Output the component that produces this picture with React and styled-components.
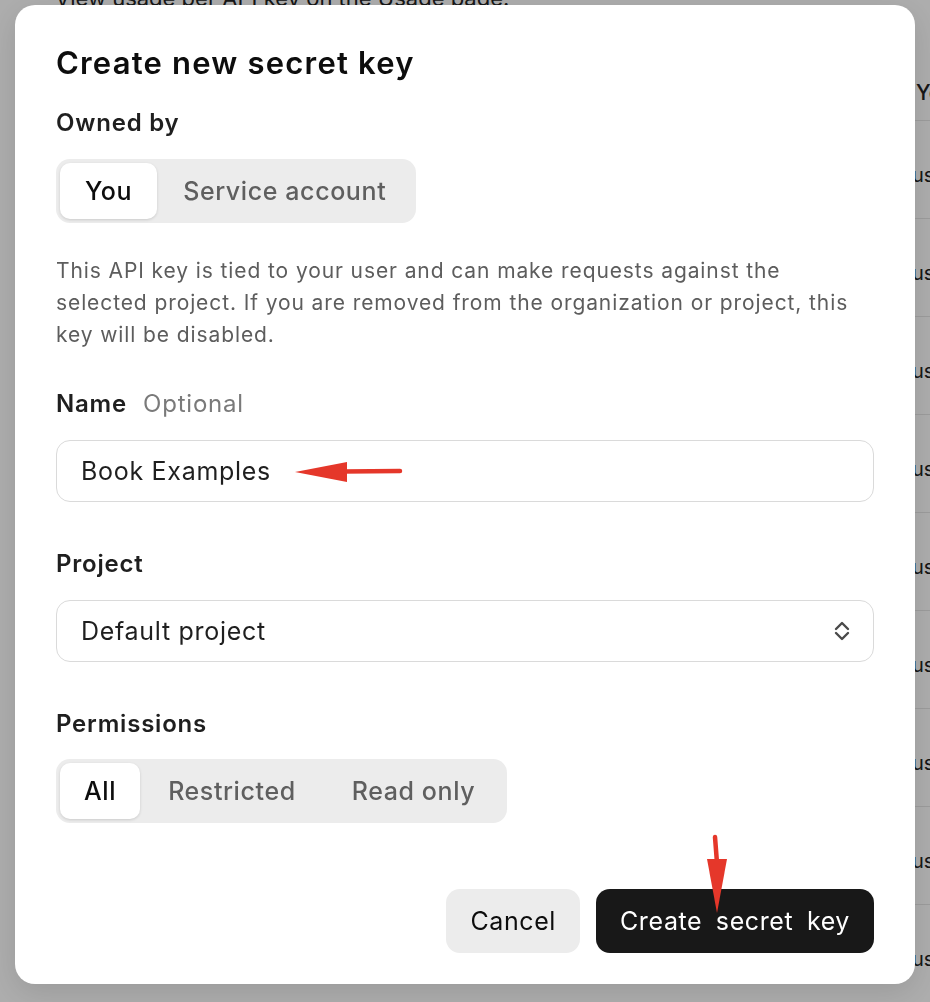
import React, { useState } from "react";
import styled, { createGlobalStyle } from "styled-components";

const GlobalStyle = createGlobalStyle`
  html, body {
    margin: 0;
    padding: 0;
    background: #ffffff;
    overflow: hidden;
  }
  body {
    font-family: Inter, "Noto Sans", "Liberation Sans", sans-serif;
    color: #1a1a1a;
  }
  * { box-sizing: border-box; }
`;

const Page = styled.div`
  width: 930px;
  height: 1002px;
  padding-left: 55px;
  overflow: hidden;
`;

const Intro = styled.p`
  margin: -16px 0 0;
  font-size: 22px;
  line-height: 28px;
  color: #222;
`;

const Table = styled.div`
  margin-top: 53px;
  display: grid;
  grid-template-columns: 857px 1fr;
`;

const HeadCell = styled.div`
  height: 56px;
  display: flex;
  align-items: center;
  padding-left: ${(p) => (p.$pad ? "4px" : "0")};
  font-size: 21px;
  font-weight: 500;
  color: #222;
  border-bottom: 1px solid #e6e6e6;
  white-space: nowrap;
`;

const Cell = styled.div`
  height: 98px;
  padding-top: 40px;
  font-size: 20px;
  line-height: 28px;
  color: #222;
  border-bottom: 1px solid #e6e6e6;
  white-space: nowrap;
`;

const Overlay = styled.div`
  position: fixed;
  inset: 0;
  background: rgba(0, 0, 0, 0.32);
  display: flex;
  align-items: flex-start;
  justify-content: flex-start;
  padding: 5px 0 0 15px;
`;

const Card = styled.div`
  position: relative;
  width: 900px;
  background: #ffffff;
  border-radius: 20px;
  padding: 40px 41px 31px;
  box-shadow: 0 8px 30px rgba(0, 0, 0, 0.12);
  display: flex;
  flex-direction: column;
`;

const Title = styled.h2`
  margin: 0;
  font-size: 31px;
  line-height: 36px;
  font-weight: 600;
  color: #0d0d0d;
  letter-spacing: 1.2px;
`;

const Label = styled.div`
  margin-top: ${(p) => p.$top}px;
  font-size: 24px;
  line-height: 30px;
  font-weight: 600;
  letter-spacing: 0.8px;
  color: #1f1f1f;
  display: flex;
  gap: 16px;
`;

const Hint = styled.span`
  font-weight: 400;
  color: #7a7a7a;
`;

const Segmented = styled.div`
  margin-top: ${(p) => p.$top}px;
  align-self: flex-start;
  display: inline-flex;
  padding: 4px;
  background: #ececec;
  border-radius: 14px;
`;

const SegOption = styled.button`
  height: 56px;
  padding: 0 ${(p) => p.$pad}px;
  border: none;
  border-radius: 10px;
  font-family: inherit;
  font-size: 25px;
  font-weight: 500;
  letter-spacing: 0.6px;
  cursor: pointer;
  background: ${(p) => (p.$active ? "#ffffff" : "transparent")};
  color: ${(p) => (p.$active ? "#0d0d0d" : "#5f5f5f")};
  box-shadow: ${(p) =>
    p.$active ? "0 1px 3px rgba(0, 0, 0, 0.14)" : "none"};
`;

const Description = styled.p`
  margin: 32px 0 0;
  max-width: 800px;
  font-size: 21px;
  line-height: 32px;
  letter-spacing: 0.9px;
  color: #5d5d5d;
`;

const Field = styled.div`
  margin-top: 21px;
  height: 62px;
  border: 1.5px solid #dadada;
  border-radius: 14px;
  display: flex;
  align-items: center;
  justify-content: space-between;
  padding: 0 23px 0 24px;
  font-size: 25px;
  letter-spacing: 0.7px;
  color: #1f1f1f;
`;

const Actions = styled.div`
  margin-top: 66px;
  display: flex;
  justify-content: flex-end;
  gap: 16px;
`;

const Button = styled.button`
  height: 64px;
  padding: 0 24px;
  border: none;
  border-radius: 14px;
  font-family: inherit;
  font-size: 25px;
  font-weight: 400;
  letter-spacing: 0.6px;
  cursor: pointer;
  word-spacing: ${(p) => (p.$primary ? "6px" : "0")};
  background: ${(p) => (p.$primary ? "#181818" : "#ececec")};
  color: ${(p) => (p.$primary ? "#ffffff" : "#0d0d0d")};
`;

const Arrow = styled.svg`
  position: absolute;
  left: ${(p) => p.$x}px;
  top: ${(p) => p.$y}px;
  pointer-events: none;
`;

const Chevrons = () => (
  <svg width="16" height="24" viewBox="0 0 16 24" fill="none">
    <path
      d="M2 10 L8 4 L14 10"
      stroke="#4a4a4a"
      strokeWidth="2.4"
      strokeLinecap="round"
      strokeLinejoin="round"
    />
    <path
      d="M2 14 L8 20 L14 14"
      stroke="#4a4a4a"
      strokeWidth="2.4"
      strokeLinecap="round"
      strokeLinejoin="round"
    />
  </svg>
);

const rows = Array.from({ length: 9 });

export default function App() {
  const [owner, setOwner] = useState("you");
  const [perm, setPerm] = useState("all");

  return (
    <>
      <GlobalStyle />
      <Page>
        <Intro>View usage per API key on the Usage page.</Intro>
        <Table>
          <HeadCell>Name</HeadCell>
          <HeadCell $pad>You</HeadCell>
          {rows.map((_, i) => (
            <React.Fragment key={i}>
              <Cell>Book Examples</Cell>
              <Cell>users</Cell>
            </React.Fragment>
          ))}
        </Table>
      </Page>

      <Overlay>
        <Card>
          <Title>Create new secret key</Title>

          <Label $top={27}>Owned by</Label>
          <Segmented $top={21}>
            <SegOption
              $pad={25}
              $active={owner === "you"}
              onClick={() => setOwner("you")}
            >
              You
            </SegOption>
            <SegOption
              $pad={26}
              $active={owner === "service"}
              onClick={() => setOwner("service")}
            >
              Service account
            </SegOption>
          </Segmented>

          <Description>
            This API key is tied to your user and can make requests against the
            selected project. If you are removed from the organization or
            project, this key will be disabled.
          </Description>

          <Label $top={38}>
            Name <Hint>Optional</Hint>
          </Label>
          <Field>Book Examples</Field>

          <Label $top={47}>Project</Label>
          <Field>
            Default project
            <Chevrons />
          </Field>

          <Label $top={47}>Permissions</Label>
          <Segmented $top={20}>
            <SegOption
              $pad={24}
              $active={perm === "all"}
              onClick={() => setPerm("all")}
            >
              All
            </SegOption>
            <SegOption
              $pad={28}
              $active={perm === "restricted"}
              onClick={() => setPerm("restricted")}
            >
              Restricted
            </SegOption>
            <SegOption
              $pad={28}
              $active={perm === "read"}
              onClick={() => setPerm("read")}
            >
              Read only
            </SegOption>
          </Segmented>

          <Actions>
            <Button>Cancel</Button>
            <Button $primary>Create secret key</Button>
          </Actions>

          <Arrow $x={278} $y={455} width="112" height="26" viewBox="0 0 112 26">
            <path d="M2 12 L54 2 L54 22 Z" fill="#e5372a" />
            <path
              d="M50 11.5 L107 11"
              stroke="#e5372a"
              strokeWidth="4.5"
              strokeLinecap="round"
            />
          </Arrow>

          <Arrow $x={686} $y={828} width="30" height="82" viewBox="0 0 30 82">
            <path
              d="M14 4 L16 30"
              stroke="#e5372a"
              strokeWidth="4.5"
              strokeLinecap="round"
            />
            <path d="M6 26 L26 26 L16 80 Z" fill="#e5372a" />
          </Arrow>
        </Card>
      </Overlay>
    </>
  );
}
